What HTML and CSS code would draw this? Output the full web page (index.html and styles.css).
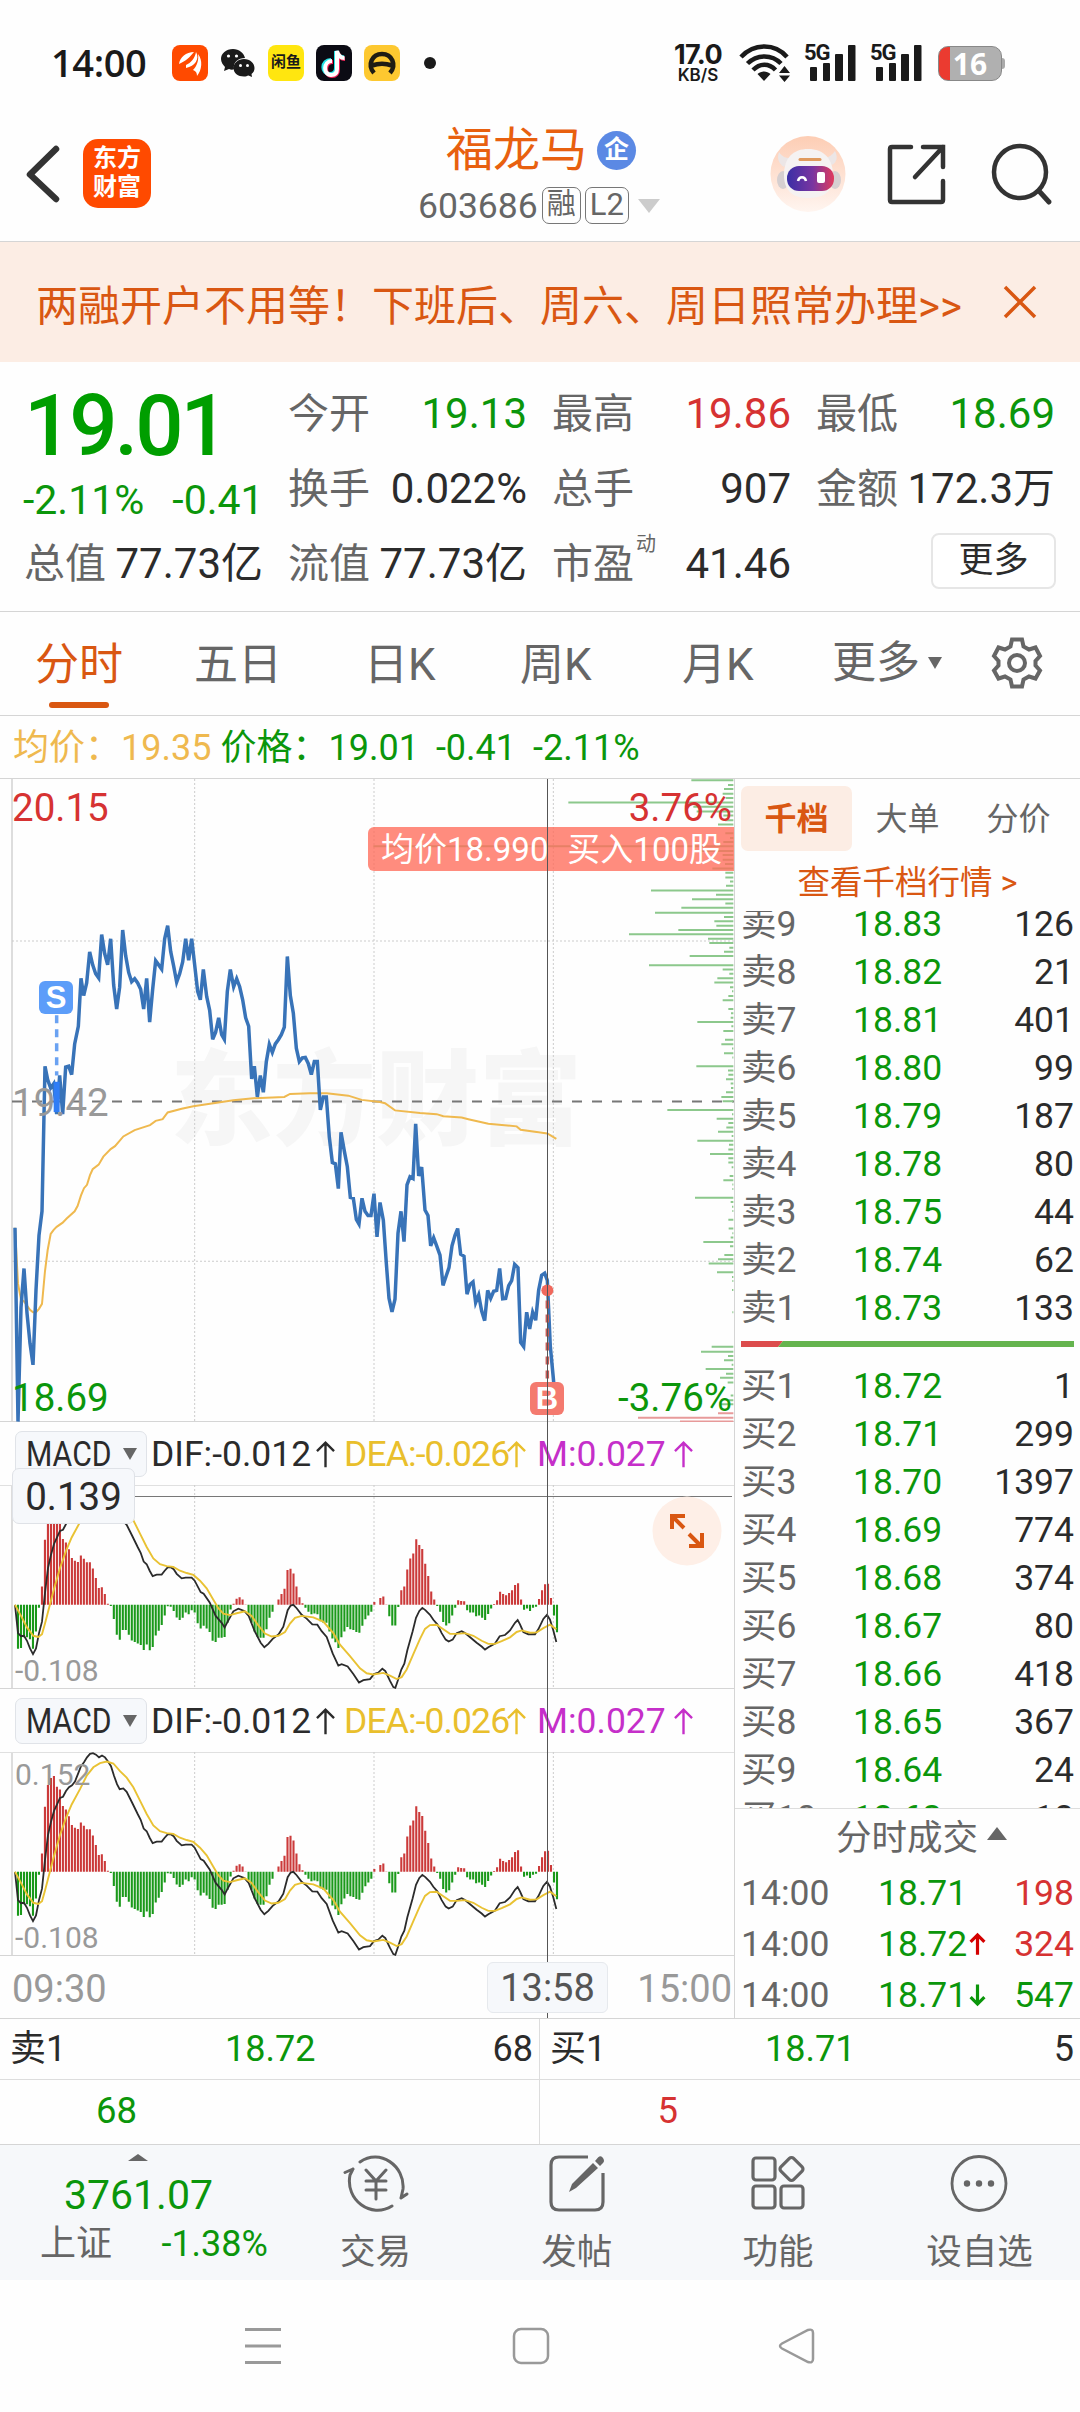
FILE: index.html
```html
<!DOCTYPE html>
<html lang="zh-CN">
  <head>
    <meta charset="UTF-8" />
    <meta name="viewport" content="width=device-width, initial-scale=1.0" />
    <title>福龙马 603686</title>
    <link rel="stylesheet" href="styles.css">
  </head>
  <body>
    <!-- Status Bar -->
    <div class="status-bar">
      <span class="clock">14:00</span>
      <div class="app-icons">
        <svg width="36" height="36" viewBox="0 0 36 36">
          <rect width="36" height="36" rx="8" fill="#ff4a00" />
          <path d="M7 19C8 12 14 7 22 7C18 12 14 16 7 19ZM14 20C19 18 23 13 24 7C28 14 23 21 14 23ZM21 25C25 21 27 15 26 9C31 15 30 25 25 31C25 28 24 26 21 25Z" fill="#fff" />
        </svg>
        <svg width="36" height="36" viewBox="0 0 36 36">
          <path d="M13 4C6 4 1 8.500 1 14C1 17 3 20 5 22L4 26L9 24C11 25 13 25 14 24C13 17 18 13 25 13C24 8 19 4 13 4Z" fill="#1a1a1a" />
          <path d="M24 14C18 14 13.500 18 13.500 23C13.500 28 18 31.500 24 31.500C26 31.500 27 31 28.500 30.500L32 32L31.500 29C33.500 27.500 34.500 25.500 34.500 23C34.500 18 30 14 24 14Z" fill="#1a1a1a" />
          <g fill="#fff"><circle cx="8.500" cy="11" r="1.600" /><circle cx="16.500" cy="11" r="1.600" /><circle cx="20.500" cy="20.500" r="1.500" /><circle cx="27.500" cy="20.500" r="1.500" /></g>
        </svg>
        <span class="app-fish">闲鱼</span>
        <svg width="36" height="36" viewBox="0 0 36 36">
          <rect width="36" height="36" rx="8" fill="#0b0b14" />
          <g fill="none" stroke-width="4">
            <path d="M15 15C5 15 5 29 14 29C18 29 20 27 20 23V6C21 10 24 12 28 12.500" stroke="#25e5e8" />
            <path d="M17 17C8 17 8 31 16 31C20 31 22 28 22 25V8C23 12 25 14 29 14" stroke="#f5255a" />
            <path d="M16 16C7 16 7 30 15 30C19 30 21 28 21 24V6C22 10 24 13 28.500 13" stroke="#fff" />
          </g>
        </svg>
        <svg width="36" height="36" viewBox="0 0 36 36">
          <rect width="36" height="36" rx="8" fill="#fdc830" />
          <path d="M10 28C3 20 8 9 18 9C28 9 33 20 26 28M8 20.500C14 18.500 22 18.500 28 20.500" fill="none" stroke="#1f1c14" stroke-width="4.500" />
        </svg>
        <i class="more-dot"></i>
      </div>
      <div class="net-speed"><b>17.0</b><span>KB/S</span></div>
      <svg class="wifi" width="52" height="38" viewBox="0 0 52 38">
        <g fill="none" stroke="#1a1a1a" stroke-width="4.500">
          <path d="M2 13C15 -1 36 -1 48 13" />
          <path d="M8.500 19.500C18 10 33 10 42 19.500" />
          <path d="M14 26C21 19 30 19 36.500 26" />
        </g>
        <path d="M18.500 30C22 26.500 28 26.500 31.500 30L25 37ZM40 29L45.500 22L51 29ZM40 31.500H51L45.500 38Z" fill="#1a1a1a" />
      </svg>
      <div class="signal">
        <span>5G</span>
        <svg width="52" height="38" viewBox="0 0 52 38" fill="#1a1a1a">
          <rect x="6" y="23" width="7" height="14" rx="1" /><rect x="19" y="19" width="7" height="18" rx="1" /><rect x="31" y="10" width="8" height="27" rx="1" /><rect x="44" y="1" width="7.500" height="36" rx="1" />
        </svg>
      </div>
      <div class="signal">
        <span>5G</span>
        <svg width="52" height="38" viewBox="0 0 52 38" fill="#1a1a1a">
          <rect x="6" y="23" width="7" height="14" rx="1" /><rect x="19" y="19" width="7" height="18" rx="1" /><rect x="31" y="10" width="8" height="27" rx="1" /><rect x="44" y="1" width="7.500" height="36" rx="1" />
        </svg>
      </div>
      <div class="battery">16</div>
    </div>

    <!-- Title Bar -->
    <div class="header">
      <svg width="34" height="58" viewBox="0 0 34 58">
        <path d="M30 4L4 29.500L30 54" fill="none" stroke="#333" stroke-width="6.500" stroke-linecap="round" stroke-linejoin="round" />
      </svg>
      <div class="logo">东方<br />财富</div>
      <div class="title">
        <div class="stock-name">福龙马<span class="badge">企</span></div>
        <div class="stock-code">603686<span class="tag">融</span><span class="tag">L2</span><i class="caret"></i></div>
      </div>
      <svg class="robot" width="76" height="78" viewBox="0 0 76 78">
        <defs>
          <linearGradient id="peach" x1="0" y1="0" x2="0" y2="1"><stop offset="0" stop-color="#fdcdb4" /><stop offset="1" stop-color="#fff5f0" /></linearGradient>
          <linearGradient id="visor" x1="0" y1="0" x2="1" y2="0"><stop offset="0" stop-color="#3a2fa6" /><stop offset=".55" stop-color="#7a35a0" /><stop offset="1" stop-color="#e03a5c" /></linearGradient>
        </defs>
        <ellipse cx="38" cy="39" rx="37.500" ry="38" fill="url(#peach)" />
        <path d="M14 32C8 28 7 23 9 17C12 22 16 23 20 23M62 30C67 27 68 22 65 16C62 20 59 22 56 23" fill="#ece6e6" />
        <ellipse cx="13" cy="45" rx="6" ry="9" fill="#d6cfd0" /><ellipse cx="65" cy="45" rx="6" ry="9" fill="#d6cfd0" />
        <path d="M14 40C14 22 24 14 38 14C54 14 63 24 63 40C63 57 54 63 38 63C22 63 14 55 14 40Z" fill="#f5f2f2" />
        <rect x="17" y="31" width="47" height="25" rx="12" fill="url(#visor)" />
        <path d="M30 24.500H50" stroke="#e09a5e" stroke-width="3" stroke-linecap="round" />
        <path d="M28 46C29 41 35 41 36 46" fill="none" stroke="#fff" stroke-width="2.500" />
        <rect x="47" y="37" width="8" height="11" rx="2" fill="#fff" />
      </svg>
      <svg class="share" width="60" height="62" viewBox="0 0 60 62">
        <path d="M24 4H5Q3 4 3 6V57Q3 59 5 59H54Q56 59 56 57V38M36 4H56V24M56 4L28 34" fill="none" stroke="#333" stroke-width="4.500" stroke-linecap="round" />
      </svg>
      <svg class="search" width="62" height="64" viewBox="0 0 62 64">
        <circle cx="29" cy="30" r="26" fill="none" stroke="#333" stroke-width="4.500" />
        <path d="M48 49L58 60" stroke="#333" stroke-width="5" stroke-linecap="round" />
      </svg>
    </div>

    <div class="notice">
      <span>两融开户不用等！下班后、周六、周日照常办理&gt;&gt;</span>
      <svg width="34" height="34" viewBox="0 0 34 34"><path d="M2 2L32 32M32 2L2 32" stroke="#d95712" stroke-width="3.500" /></svg>
    </div>

    <!-- Quote -->
    <div class="quote">
      <div class="price-box">
        <div class="price">19.01</div>
        <div class="change"><span>-2.11%</span><span>-0.41</span></div>
      </div>
      <div class="stat"><label>今开</label><span class="green">19.13</span></div>
      <div class="stat"><label>最高</label><span class="red">19.86</span></div>
      <div class="stat"><label>最低</label><span class="green">18.69</span></div>
      <div class="stat"><label>换手</label><span>0.022%</span></div>
      <div class="stat"><label>总手</label><span>907</span></div>
      <div class="stat"><label>金额</label><span>172.3万</span></div>
      <div class="stat"><label>总值</label><span>77.73亿</span></div>
      <div class="stat"><label>流值</label><span>77.73亿</span></div>
      <div class="stat"><label>市盈<sup>动</sup></label><span>41.46</span></div>
      <div class="stat"><button class="more-btn">更多</button></div>
    </div>

    <!-- Period Tabs -->
    <div class="tabs">
      <span class="tab active">分时</span>
      <span class="tab">五日</span>
      <span class="tab">日K</span>
      <span class="tab">周K</span>
      <span class="tab">月K</span>
      <span class="tab tab-more">更多<i class="caret small"></i></span>
      <svg class="gear" width="54" height="54" viewBox="0 0 54 54" fill="none" stroke="#666" stroke-width="4">
        <path d="M22 3.500H32L33.500 10.500L39 13.500L45.500 11.500L50 20L45.500 25V29.500L50 34.500L45.500 42.500L39 40.500L33.500 43.500L32 50.500H22L20.500 43.500L15 40.500L8.500 42.500L4 34.500L8.500 29.500V25L4 20L8.500 11.500L15 13.500L20.500 10.500Z" />
        <circle cx="27" cy="27" r="8" />
      </svg>
    </div>

    <div class="legend">
      <span class="avg">均价：</span><span class="avg">19.35</span>
      <span class="green lab">价格：</span><span class="green">19.01</span>
      <span class="green gap">-0.41</span><span class="green gap">-2.11%</span>
    </div>

    <div class="main">
      <div class="chart">
        <div class="trend">
          <div class="watermark">东方财富</div>
          <svg id="trendSvg" width="734" height="643" viewBox="0 20 2202 1529" preserveAspectRatio="none"></svg>
          <span class="axis top red">20.15</span>
          <span class="axis mid">19.42</span>
          <span class="axis bottom green">18.69</span>
          <span class="axis top right red">3.76%</span>
          <span class="axis bottom right green">-3.76%</span>
          <span class="marker sell">S</span>
          <span class="marker buy">B</span>
          <div class="deal-tip"><span>均价18.990</span><span>买入100股</span></div>
        </div>

        <div class="macd-head">
          <div class="select"><b>MACD</b><i class="caret small"></i></div>
          <span class="dif">DIF:-0.012</span><svg class="arrow" viewBox="0 0 20 30"><path d="M10 29V3M1 12L10 3L19 12" /></svg>
          <span class="dea">DEA:-0.026</span><svg class="arrow dea" viewBox="0 0 20 30"><path d="M10 29V3M1 12L10 3L19 12" /></svg>
          <span class="m">M:0.027</span><svg class="arrow m" viewBox="0 0 20 30"><path d="M10 29V3M1 12L10 3L19 12" /></svg>
        </div>
        <div class="macd">
          <svg class="macd-svg" width="734" height="204" viewBox="0 868 2202 533" preserveAspectRatio="none"></svg>
          <span class="axis-small low">-0.108</span>
          <div class="cross-y"></div>
          <div class="value-tip">0.139</div>
          <svg class="expand" width="70" height="70" viewBox="0 0 70 70">
            <circle cx="35" cy="35" r="34.500" fill="#feefe7" />
            <path d="M33 20H20V33M21 21L32 32M37 38L49 50M50 37V50H37" fill="none" stroke="#d95712" stroke-width="4" />
          </svg>
        </div>

        <div class="macd-head">
          <div class="select"><b>MACD</b><i class="caret small"></i></div>
          <span class="dif">DIF:-0.012</span><svg class="arrow" viewBox="0 0 20 30"><path d="M10 29V3M1 12L10 3L19 12" /></svg>
          <span class="dea">DEA:-0.026</span><svg class="arrow dea" viewBox="0 0 20 30"><path d="M10 29V3M1 12L10 3L19 12" /></svg>
          <span class="m">M:0.027</span><svg class="arrow m" viewBox="0 0 20 30"><path d="M10 29V3M1 12L10 3L19 12" /></svg>
        </div>
        <div class="macd">
          <svg class="macd-svg" width="734" height="204" viewBox="0 868 2202 533" preserveAspectRatio="none"></svg>
          <span class="axis-small high">0.152</span>
          <span class="axis-small low">-0.108</span>
        </div>

        <div class="time-axis"><span>09:30</span><span class="end">15:00</span></div>
        <div class="cross-x"></div>
        <div class="time-tip">13:58</div>
      </div>

      <!-- Order Book -->
      <div class="book">
        <div class="book-tabs"><span class="active">千档</span><span>大单</span><span>分价</span></div>
        <div class="book-link">查看千档行情 &gt;</div>
        <div class="depth sells" id="sells"></div>
        <svg class="ratio" width="333" height="6" viewBox="0 0 333 6"><path d="M0 0H42L37 6H0Z" fill="#dc4c4c" /><path d="M42 0H333V6H37Z" fill="#65b44e" /></svg>
        <div class="depth buys" id="buys"></div>
        <div class="ticks-title">分时成交<i class="caret up"></i></div>
        <div id="ticks"></div>
      </div>
    </div>

    <!-- Best Bid / Ask -->
    <div class="best">
      <div class="best-row"><span>卖1</span><span class="green">18.72</span><span>68</span></div>
      <div class="best-row"><span>买1</span><span class="green">18.71</span><span>5</span></div>
      <div class="queue green">68</div>
      <div class="queue red">5</div>
    </div>

    <!-- Bottom Bar -->
    <div class="footer">
      <div class="index">
        <i class="caret up flat"></i>
        <div class="index-value">3761.07</div>
        <div class="index-row"><label>上证</label><span>-1.38%</span></div>
      </div>
      <div class="action">
        <svg width="66" height="62" viewBox="0 0 66 62">
          <path d="M17 9C37 -5 62 13 60 36L58 45M58 45L64 41M49 53C28 66 2 47 7 22L10 16M10 16L2 19.500M23 17L33 28L43 17M33 28V46M23 28H43M23 37H43" fill="none" stroke="#666" stroke-width="3" stroke-linecap="round" />
        </svg>
        <span>交易</span>
      </div>
      <div class="action">
        <svg width="58" height="62" viewBox="0 0 58 62">
          <path d="M40 4H11Q3 4 3 12V49Q3 57 11 57H47Q55 57 55 49V20" fill="none" stroke="#666" stroke-width="3.200" />
          <path d="M21 39L24 31L45 10L50 15L28 35ZM47 8L50 4.500Q53 2 55 5Q57 8 55 10L52 13Z" fill="#666" />
        </svg>
        <span>发帖</span>
      </div>
      <div class="action">
        <svg width="56" height="62" viewBox="0 0 56 62" fill="none" stroke="#666" stroke-width="3.200">
          <rect x="3" y="5" width="22" height="22" rx="3" /><rect x="3" y="33" width="22" height="22" rx="3" /><rect x="31" y="33" width="22" height="22" rx="3" />
          <rect x="32.500" y="7" width="18" height="18" rx="3" transform="rotate(45 41.500 16)" />
        </svg>
        <span>功能</span>
      </div>
      <div class="action">
        <svg width="60" height="62" viewBox="0 0 60 62">
          <circle cx="30" cy="30.500" r="27" fill="none" stroke="#666" stroke-width="2.800" />
          <g fill="#666"><circle cx="18" cy="30.500" r="3.200" /><circle cx="30" cy="30.500" r="3.200" /><circle cx="42" cy="30.500" r="3.200" /></g>
        </svg>
        <span>设自选</span>
      </div>
    </div>

    <div class="nav">
      <svg width="38" height="38" viewBox="0 0 38 38"><path d="M1 2.500H37M1 19H37M1 35.500H37" stroke="#999" stroke-width="3" /></svg>
      <svg width="38" height="38" viewBox="0 0 38 38"><rect x="2" y="2" width="34" height="34" rx="7" fill="none" stroke="#999" stroke-width="2.500" /></svg>
      <svg width="38" height="38" viewBox="0 0 38 38"><path d="M4 16.500L30 3Q35 1.500 35 6V32Q35 36.500 30 35L4 21.500Q0 19 4 16.500Z" fill="none" stroke="#999" stroke-width="2.500" /></svg>
    </div>

    <script src="script.js"></script>
  </body>
</html>
```
FILE: script.js
```js
// Order book levels
const sells = [
  [9, '18.83', 126], [8, '18.82', 21], [7, '18.81', 401],
  [6, '18.80', 99], [5, '18.79', 187], [4, '18.78', 80],
  [3, '18.75', 44], [2, '18.74', 62], [1, '18.73', 133],
]

const buys = [
  [1, '18.72', 1], [2, '18.71', 299], [3, '18.70', 1397],
  [4, '18.69', 774], [5, '18.68', 374], [6, '18.67', 80],
  [7, '18.66', 418], [8, '18.65', 367], [9, '18.64', 24],
  [10, '18.63', 18],
]

const ticks = [
  { time: '14:00', price: '18.71', dir: '', qty: 198, color: 'red' },
  { time: '14:00', price: '18.72', dir: 'up', qty: 324, color: 'red' },
  { time: '14:00', price: '18.71', dir: 'down', qty: 547, color: 'green' },
]

const arrows = {
  '': '',
  up: '<svg class="dir" viewBox="0 0 16 22"><path d="M8 21V2M1.500 9L8 2.500L14.500 9" stroke="#d40000" /></svg>',
  down: '<svg class="dir" viewBox="0 0 16 22"><path d="M8 1V20M1.500 13L8 19.500L14.500 13" stroke="#0b960b" /></svg>',
}

function renderLevels(id, label, data) {
  document.getElementById(id).innerHTML = data
    .map(
      ([level, price, qty]) =>
        `<div class="level"><span>${label}${level}</span><span class="green">${price}</span><span>${qty}</span></div>`
    )
    .join('')
}

renderLevels('sells', '卖', sells)
renderLevels('buys', '买', buys)

document.getElementById('ticks').innerHTML = ticks
  .map(
    (t) =>
      `<div class="tick"><span>${t.time}</span><span class="green">${t.price}${arrows[t.dir]}</span><span class="${t.color}">${t.qty}</span></div>`
  )
  .join('')

// Minute prices as x,y pairs
const priceLine =
  '45,1087 54,1548 63,1277 72,1184 81,1290 90,1362 99,1413 108,1235 117,1105 126,1048 135,703 143,735 152,755 161,745 170,817 179,725 188,817 197,705 206,703 215,723 224,650 235,608 243,494 251,535 260,505 269,431 278,462 287,483 296,493 305,390 314,435 323,462 332,400 341,510 350,567 359,515 368,379 377,440 386,480 395,502 404,495 413,505 422,520 431,567 440,494 449,598 458,520 467,452 476,462 485,472 494,400 503,369 512,430 521,465 530,503 539,483 548,455 557,400 566,451 575,400 584,462 593,525 601,545 610,473 620,537 629,570 638,639 647,622 656,588 665,628 673,639 682,525 691,473 701,514 710,495 719,514 728,545 737,588 746,608 755,733 763,703 772,776 781,725 790,765 799,692 808,651 817,670 826,650 835,640 844,628 853,610 862,442 871,535 880,577 889,660 898,692 907,683 916,682 925,697 934,723 943,692 952,692 961,807 970,776 979,776 988,872 997,932 1006,935 1015,994 1023,860 1033,905 1042,942 1051,1015 1060,1017 1069,1067 1077,1078 1086,1017 ' +
  '1095,1048 1104,1058 1113,1058 1122,1006 1131,1109 1140,1027 1150,1069 1159,1172 1167,1255 1176,1287 1185,1257 1194,1100 1203,1048 1212,1120 1221,985 1230,966 1239,970 1247,840 1256,964 1265,943 1275,1045 1284,1058 1292,1130 1301,1111 1310,1130 1320,1152 1329,1224 1338,1203 1347,1182 1356,1130 1365,1105 1373,1089 1382,1150 1392,1155 1401,1245 1410,1222 1419,1216 1427,1265 1436,1247 1445,1285 1454,1308 1463,1236 1472,1255 1481,1238 1490,1236 1499,1184 1508,1256 1517,1255 1526,1225 1535,1213 1544,1174 1554,1182 1562,1360 1571,1370 1580,1288 1589,1328 1598,1288 1607,1307 1616,1235 1625,1200 1634,1195 1642,1212 1651,1370 1660,1445 1669,1528'

const avgLine =
  '45,1087 54,1220 63,1258 72,1262 81,1272 90,1282 99,1288 108,1288 117,1280 126,1268 135,1190 143,1140 152,1102 161,1092 170,1085 188,1075 200,1065 224,1048 233,1035 243,1010 252,993 261,985 270,962 278,948 296,937 310,918 332,900 345,893 370,870 404,855 450,843 467,833 488,829 503,813 545,804 580,798 640,791 700,784 760,779 853,776 870,769 930,767 980,767 1045,773 1085,783 1140,788 1155,791 1185,808 1260,814 1310,817 1330,822 1385,825 1405,829 1465,840 1550,846 1562,854 1642,863 1669,876'

// Pending orders at each price: y, length
const orders = [
  [23, 126], [34, 16], [44, 28], [55, 32], [65, 23], [76, 495], [86, 120], [97, 110], [107, 30], [118, 25], [128, 46],
  [149, 24], [160, 10], [170, 30], [180, 1080], [191, 120], [201, 32], [212, 32], [222, 25], [233, 63], [243, 24], [254, 24], [264, 10], [274, 22],
  [285, 247], [295, 52], [306, 124], [316, 24], [326, 156], [338, 235], [348, 28], [358, 57], [369, 51], [379, 165], [389, 313], [400, 76], [410, 72],
  [421, 12], [431, 28], [441, 131], [463, 253], [473, 32], [483, 12], [494, 48], [504, 57], [515, 10], [525, 4], [536, 15], [546, 32],
  [567, 15], [577, 7], [588, 8], [598, 108], [608, 6], [619, 30], [640, 25], [651, 36], [661, 4], [672, 28], [682, 3], [703, 111], [713, 16],
  [723, 15], [734, 22], [744, 8], [755, 7], [765, 22], [776, 36], [786, 32], [807, 198], [817, 4], [828, 50], [838, 15], [849, 21], [859, 46],
  [869, 5], [880, 108], [890, 13], [901, 15], [912, 70], [922, 15], [932, 15], [943, 5], [964, 11], [974, 30], [984, 3], [995, 3], [1016, 115], [1026, 8],
  [1037, 4], [1047, 3], [1068, 15], [1089, 14], [1100, 3], [1110, 8], [1121, 90], [1131, 10], [1152, 27], [1162, 46], [1172, 74], [1193, 49], [1204, 4], [1214, 3], [1235, 4],
  [1288, 3], [1370, 65], [1382, 97], [1392, 16], [1402, 28], [1413, 5], [1423, 83], [1434, 22], [1444, 40], [1455, 17], [1486, 8], [1497, 15], [1507, 40],
]
const bidOrders = [[1528, 46], [1539, 286], [1548, 160]]

// MACD histogram, positive values are drawn below the zero line
const hist = [
  0, 115, 113, 85, 85, 90, 115, 70, 8, -48, -170, -227, -245, -250, -222, -215, -172, -163, -145, -122, -115, -112, -129, -120, -111, -111, -95, -70, -44, -46, -28, -3,
  3, 37, 78, 91, 66, 66, 78, 93, 97, 101, 105, 118, 104, 119, 110, 80, 68, 53, 28, 4, 5, 16, 33, 40, 34, 20, 25, 14, 20, 48, 62, 55, 62, 71, 94, 97, 86, 86, 84, 47, 12,
  -3, -16, -20, -14, -1, 22, 47, 70, 84, 86, 86, 64, 34, 18, 0, -14, -28, -42, -91, -94, -82, -48, -20, -4,
  8, 18, 25, 23, 25, 43, 47, 47, 70, 88, 98, 113, 85, 70, 58, 64, 66, 71, 73, 55, 38, 28, 18, -7, 0, -18, -22, -1, 30, 54, 54, 6,
  -38, -48, -92, -121, -134, -171, -156, -146, -107, -75, -35, -14, 3, 18, 45, 54, 48, 28, 8, -12, -10, -9, 14, 20, 20, 30, 28, 34, 40, 24, 10,
  -2, -12, -34, -28, -25, -31, -38, -52, -56, -14, 13, 10, 16, 8, 5, -15, -38, -54, -55, -18, 28, 72,
]

const difLine =
  '45,1181 54,1255 63,1263 72,1262 81,1275 90,1295 99,1310 108,1295 117,1255 126,1225 135,1150 144,1085 153,1050 162,1022 171,1005 180,988 189,985 198,970 207,960 216,955 225,945 234,925 243,905 252,895 261,882 270,873 279,871 288,875 297,882 306,877 315,882 324,893 333,905 342,930 351,952 359,965 370,963 380,972 395,998 413,1030 422,1045 431,1068 440,1075 449,1092 458,1106 470,1102 485,1102 494,1092 503,1083 512,1083 521,1088 530,1100 545,1112 557,1110 575,1110 584,1118 602,1148 611,1152 629,1175 647,1210 665,1228 674,1240 683,1225 700,1198 715,1191 733,1197 746,1210 764,1250 782,1280 793,1292 805,1283 818,1270 836,1258 850,1238 863,1195 872,1183 880,1181 890,1190 905,1207 920,1217 937,1232 952,1233 965,1250 980,1265 998,1308 1015,1340 1025,1336 1043,1342 1060,1362 1077,1384 1090,1378 1110,1375 1122,1362 1135,1358 1147,1348 1156,1354 1170,1380 1180,1396 1186,1398 1195,1375 1204,1350 1213,1335 1222,1300 1238,1250 1248,1215 1258,1197 1267,1189 1276,1195 1290,1207 1300,1220 1312,1232 1325,1255 1337,1272 1346,1277 1358,1272 1370,1255 1385,1250 1395,1255 1405,1262 1430,1280 1445,1290 1455,1298 1465,1292 1485,1282 1499,1263 1515,1260 1530,1248 1545,1228 1553,1221 1560,1232 1570,1252 1585,1258 1605,1258 1615,1245 1630,1218 1641,1207 1650,1220 1660,1248 1669,1278'

const deaLine =
  '45,1181 63,1210 81,1240 100,1262 115,1265 126,1258 135,1230 144,1200 162,1140 180,1085 198,1040 215,1005 240,965 260,930 280,908 300,897 320,893 340,898 360,918 380,935 400,960 420,995 440,1030 460,1060 480,1075 500,1080 520,1082 540,1092 560,1098 580,1103 600,1118 620,1138 640,1168 655,1190 670,1204 690,1208 710,1203 735,1198 755,1210 775,1235 795,1256 815,1264 835,1262 855,1252 870,1230 885,1215 905,1210 940,1214 970,1225 1000,1255 1020,1285 1050,1315 1080,1347 1100,1360 1120,1363 1150,1359 1170,1366 1190,1375 1205,1370 1220,1350 1240,1310 1260,1270 1275,1244 1290,1234 1310,1233 1330,1245 1350,1257 1370,1257 1395,1255 1420,1262 1445,1275 1465,1283 1485,1283 1505,1276 1530,1266 1550,1252 1565,1248 1590,1254 1610,1253 1630,1242 1650,1233 1669,1245'

const gridX = [584, 1122, 1660]

function polyline(points, color, width) {
  return `<polyline points="${points}" fill="none" stroke="${color}" stroke-width="${width}" />`
}

function path(d, color, width, dash = '') {
  return `<path d="${d}" fill="none" stroke="${color}" stroke-width="${width}" stroke-dasharray="${dash}" />`
}

function drawTrend() {
  const bars = (list) => list.map(([y, w]) => `M${2200 - w} ${y}H2200`).join('')
  const grid = gridX.map((x) => `M${x} 20V1549`).join('') + 'M36 405H2202M36 1167H2202'
  document.getElementById('trendSvg').innerHTML =
    path(grid, '#ccc', 1, '2 2') +
    path('M36 787H2202', '#777', 2, '10 10') +
    path(bars(orders), '#8cc88c', 2) +
    path(bars(bidOrders), '#e79a9a', 2) +
    polyline(avgLine, '#efb94f', 2) +
    polyline(priceLine, '#3873b8', 3.5) +
    path('M170 582V725', '#6aa2f2', 3.5, '8 6') +
    path('M170 740V812', '#2f7df6', 6) +
    path('M1642 1260V1455', '#c65b57', 3.5, '8 6') +
    '<ellipse cx="1642" cy="1236" rx="18" ry="14" fill="#f0685c" />'
}

function drawMacd(svg) {
  const step = 1626 / (hist.length - 1)
  let up = ''
  let down = ''
  hist.forEach((v, i) => {
    const bar = `M${(45 + i * step).toFixed(1)} 1181v${v}`
    if (v < 0) up += bar
    if (v > 0) down += bar
  })
  svg.innerHTML =
    path(gridX.map((x) => `M${x} 868V1401`).join(''), '#ccc', 1, '2 2') +
    path(up, '#cb3a3a', 2.1) +
    path(down, '#1a991a', 2.1) +
    polyline(difLine, '#2b2b2b', 1.8) +
    polyline(deaLine, '#e9c233', 1.9)
}

drawTrend()
document.querySelectorAll('.macd-svg').forEach(drawMacd)
```
FILE: styles.css
```css
/* Basic Styles */
* {
  box-sizing: border-box;
}

body {
  margin: 0;
  width: 1080px;
  height: 2412px;
  overflow: hidden;
  background-color: #fefefe;
  color: #2b2b2b;
  font-family: Roboto, "Noto Sans CJK SC", sans-serif;
  font-size: 36px;
  white-space: nowrap;
}

svg {
  display: block;
  flex: none;
}

.green {
  color: #0b960b;
}

.red {
  color: #d63232;
}

.caret {
  display: inline-block;
  border: 11px solid transparent;
  border-top: 14px solid #ccc;
  border-bottom: 0;
}

.caret.small {
  border-width: 12px 7.5px 0;
  border-top-color: #666;
}

.caret.up {
  border-width: 0 10.5px 13px;
  border-bottom: 13px solid #666;
}

.caret.flat {
  border-bottom-width: 7px;
}

/* Status Bar */
.status-bar {
  display: flex;
  align-items: center;
  height: 126px;
  padding-left: 51px;
  color: #1a1a1a;
}

.clock {
  width: 121px;
  padding-bottom: 3px;
  font: 600 38px/40px "Open Sans", Roboto, sans-serif;
  letter-spacing: -0.4px;
}

.app-icons {
  display: flex;
  align-items: center;
  gap: 12px;
  width: 500px;
}

.app-fish {
  width: 36px;
  height: 36px;
  border-radius: 8px;
  background-color: #ffe60f;
  font-size: 15px;
  font-weight: 700;
  line-height: 35px;
  text-align: center;
}

.more-dot {
  width: 12px;
  height: 12px;
  margin-left: 12px;
  border-radius: 50%;
  background-color: #1a1a1a;
}

.net-speed {
  display: flex;
  flex-direction: column;
  align-items: center;
  width: 52px;
}

.net-speed b {
  font: 700 27px/24px Inter, sans-serif;
  letter-spacing: -0.6px;
}

.net-speed span {
  font: 600 17px/16px Inter, sans-serif;
}

.wifi {
  margin-left: 15px;
}

.signal {
  position: relative;
  margin-left: 14px;
}

.signal span {
  position: absolute;
  left: 0;
  top: -2px;
  font: 700 22px/22px Roboto, sans-serif;
  letter-spacing: -1px;
}

.wifi + .signal {
  margin-left: 13px;
}

.battery {
  position: relative;
  width: 64px;
  height: 35px;
  margin-left: 16px;
  border: 1px solid #888;
  border-radius: 10px;
  background: linear-gradient(90deg, #eb3b30 11px, #b0b0b0 11px);
  color: #fff;
  font: 700 30px/33px "Open Sans", sans-serif;
  text-align: center;
}

.battery::after {
  content: "";
  position: absolute;
  right: -4px;
  top: 11px;
  width: 3px;
  height: 11px;
  border-radius: 0 3px 3px 0;
  background-color: #aaa;
}

/* Title Bar */
.header {
  display: flex;
  align-items: center;
  height: 116px;
  padding: 0 0 20px 26px;
  border-bottom: 1px solid #d5d5d5;
}

.logo {
  width: 68px;
  height: 69px;
  margin-left: 23px;
  padding-top: 5px;
  border-radius: 15px;
  background-color: #ff4a00;
  color: #fff;
  font-size: 24px;
  font-weight: 700;
  line-height: 29px;
  text-align: center;
}

.title {
  width: 270px;
  margin-left: 267px;
}

.stock-name {
  display: flex;
  align-items: center;
  height: 52px;
  margin-top: 12px;
  padding: 0 0 0 28px;
  color: #e8600f;
  font-size: 47px;
  line-height: 48px;
}

.badge {
  width: 39px;
  height: 39px;
  margin: 1px 0 0 10px;
  border-radius: 50%;
  background-color: #5b89e4;
  color: #fff;
  font-size: 25px;
  font-weight: 700;
  line-height: 37px;
  text-align: center;
}

.stock-code {
  display: flex;
  align-items: center;
  height: 60px;
  color: #666;
  font-size: 35.5px;
}

.tag {
  height: 37px;
  margin-left: 4px;
  padding: 0 4px;
  border: 1.5px solid #777;
  border-radius: 7px;
  font-size: 29px;
  line-height: 33px;
}

.tag + .tag {
  font-size: 31px;
}

.stock-code .caret {
  margin-left: 9px;
}

.robot {
  margin-left: 82px;
}

.share {
  margin-left: 41px;
}

.search {
  margin-left: 44px;
}

.notice {
  display: flex;
  align-items: center;
  justify-content: space-between;
  height: 120px;
  padding: 0 43px 0 36px;
  background-color: #fcede4;
  color: #d95712;
  font-size: 42px;
}

/* Quote */
.quote {
  display: grid;
  grid-template-columns: repeat(4, 238px);
  grid-auto-rows: 75px;
  column-gap: 26px;
  height: 250px;
  padding: 14px 25px 0;
  border-bottom: 1px solid #d5d5d5;
}

.price-box {
  grid-row: span 2;
  color: #009e00;
}

.price {
  margin-left: -1px;
  padding-top: 6px;
  font-size: 85px;
  font-weight: 500;
  line-height: 88px;
  letter-spacing: -3px;
}

.change {
  display: flex;
  gap: 28px;
  margin: 9px 0 0 -2px;
  color: #0b960b;
  font-size: 41px;
  line-height: 42px;
}

.stat {
  display: flex;
  align-items: center;
  justify-content: space-between;
  font-size: 42px;
  line-height: 50px;
}

.stat label {
  position: relative;
  margin-left: -1px;
  color: #666;
  font-size: 41px;
}

.stat sup {
  position: absolute;
  left: 84px;
  top: -5px;
  font-size: 20px;
  line-height: 20px;
}

.more-btn {
  width: 125px;
  height: 56px;
  margin: -5px -1px 0 auto;
  padding: 0;
  border: 2px solid #e6e6e6;
  border-radius: 8px;
  background-color: #fff;
  color: #2b2b2b;
  font: 35px/48px Roboto, "Noto Sans CJK SC", sans-serif;
}

/* Period Tabs */
.tabs {
  display: flex;
  height: 104px;
  padding-left: 35px;
  border-bottom: 1px solid #d5d5d5;
  color: #666;
  font-size: 44px;
  line-height: 107px;
}

.tab {
  position: relative;
  width: 159px;
}

.tab:nth-child(2) {
  width: 170px;
}

.tab:nth-child(3) {
  width: 156px;
}

.tab:nth-child(4) {
  width: 162px;
}

.tab.active {
  color: #d95712;
}

.tab.active::after {
  content: "";
  position: absolute;
  left: 14px;
  bottom: 7px;
  width: 60px;
  height: 6px;
  border-radius: 3px;
  background-color: #d95712;
}

.tab.tab-more {
  display: flex;
  align-items: center;
  width: 158px;
  margin-left: -9px;
}

.tab-more .caret {
  margin: -2px 0 0 8px;
}

.gear {
  margin-top: 24px;
}

.legend {
  display: flex;
  height: 63px;
  padding-left: 13px;
  border-bottom: 1px solid #d5d5d5;
  line-height: 64px;
}

.legend .avg {
  color: #efb94f;
}

.legend .lab {
  margin-left: 9px;
}

.legend .gap {
  margin-left: 17px;
}

/* Charts */
.main {
  display: flex;
  height: 1240px;
  border-bottom: 1px solid #d5d5d5;
}

.chart {
  position: relative;
  width: 735px;
  border-right: 1px solid #d5d5d5;
}

.trend {
  position: relative;
  height: 643px;
  border-bottom: 1.5px solid #d5d5d5;
}

.trend::before,
.macd::before {
  content: "";
  position: absolute;
  left: 11px;
  top: 0;
  width: 1.5px;
  height: 100%;
  background-color: #ddd;
}

.trend svg,
.macd-svg {
  position: relative;
}

.trend svg *,
.macd-svg * {
  vector-effect: non-scaling-stroke;
}

.watermark {
  position: absolute;
  left: 170px;
  top: 258px;
  color: #f6f6f6;
  font-size: 103px;
  font-weight: 900;
  line-height: 130px;
}

.axis {
  position: absolute;
  left: 12px;
  font-size: 38.5px;
  line-height: 40px;
}

.axis.top {
  top: 9px;
}

.axis.mid {
  top: 304px;
  color: #999;
}

.axis.bottom {
  top: 599px;
}

.axis.right {
  left: auto;
  right: 2px;
}

.marker {
  position: absolute;
  left: 39px;
  top: 202px;
  width: 34px;
  height: 33px;
  border-radius: 6px;
  background-color: #5c9df9;
  color: #fff;
  font: 700 31px/33px "Liberation Sans", sans-serif;
  text-align: center;
}

.marker.buy {
  left: 530px;
  top: 603px;
  background-color: #f47a6f;
}

.deal-tip {
  position: absolute;
  left: 368px;
  right: 0;
  top: 48px;
  display: flex;
  justify-content: space-between;
  height: 44px;
  padding: 0 12px 0 13px;
  border-radius: 6px 0 0 6px;
  background-color: rgba(255, 107, 90, 0.78);
  color: #fff;
  font-size: 33px;
  line-height: 45px;
}

.macd-head {
  display: flex;
  align-items: center;
  height: 63px;
  padding-left: 15px;
  font-size: 35.5px;
}

.select {
  display: flex;
  align-items: center;
  width: 132px;
  height: 46px;
  margin-right: 4px;
  padding-left: 10px;
  border: 1px solid #e0e3e8;
  border-radius: 7px;
  background-color: #f6f8fb;
}

.select b {
  width: 97px;
  font-weight: 400;
  transform: scaleX(0.85);
  transform-origin: left;
}

.macd-head span {
  width: 158px;
}

.macd-head span.dea {
  letter-spacing: -0.9px;
}

.macd-head span.m {
  width: 130px;
  margin-left: -2px;
}

.arrow {
  width: 19px;
  height: 30px;
  margin: 0 9px 0 7px;
  fill: none;
  stroke: #2b2b2b;
  stroke-width: 2.5;
}

.dea {
  color: #e9bf2c;
  stroke: #e9bf2c;
  stroke-width: 0;
}

.m {
  color: #c52fc9;
  stroke: #c52fc9;
  stroke-width: 0;
}

.arrow.dea,
.arrow.m {
  stroke-width: 2.5;
}

.arrow.dea {
  margin: 0 13px 0 5px;
}

.macd {
  position: relative;
  height: 204px;
  border-top: 1px solid #e0e0e0;
  border-bottom: 1.5px solid #d5d5d5;
}

.macd-svg {
  margin-top: -1px;
}

.axis-small {
  position: absolute;
  left: 15px;
  color: #999;
  font-size: 30px;
  line-height: 32px;
}

.axis-small.high {
  top: 6px;
}

.axis-small.low {
  bottom: 1px;
}

.cross-y {
  position: absolute;
  left: 12px;
  right: 2px;
  top: 9.5px;
  height: 1.5px;
  background-color: #777;
}

.cross-x {
  position: absolute;
  left: 547px;
  top: 0;
  width: 1px;
  height: 1239px;
  background-color: #555;
}

.value-tip {
  position: absolute;
  left: 12px;
  top: -18px;
  width: 123px;
  height: 56px;
  border: 1px solid #dfe2e7;
  border-radius: 7px;
  background-color: #f6f8fb;
  font-size: 38.5px;
  line-height: 56px;
  text-align: center;
}

.expand {
  position: absolute;
  left: 652px;
  top: 10px;
}

.time-axis {
  display: flex;
  justify-content: space-between;
  padding: 0 2px 0 12px;
  color: #999;
  font-size: 38px;
  line-height: 66px;
}

.time-tip {
  position: absolute;
  left: 487px;
  top: 1183px;
  width: 121px;
  height: 51px;
  border: 1px solid #e6e9ed;
  border-radius: 6px;
  background-color: #f6f8fb;
  color: #555;
  font-size: 38px;
  line-height: 51px;
  text-align: center;
}

/* Order Book */
.book {
  width: 345px;
  padding: 7px 6px 0;
}

.book-tabs {
  display: flex;
  height: 65px;
  color: #666;
  font-size: 32px;
  line-height: 67px;
  text-align: center;
}

.book-tabs span {
  width: 111px;
}

.book-tabs .active {
  border-radius: 7px;
  background-color: #fcede4;
  color: #d95712;
  font-weight: 700;
}

.book-link {
  height: 60px;
  color: #d95712;
  font-size: 32.5px;
  line-height: 64px;
  text-align: center;
}

.depth {
  display: flex;
  flex-direction: column;
  overflow: hidden;
}

.depth.sells {
  justify-content: flex-end;
  height: 420px;
}

.ratio {
  margin: 10px 0 14px;
}

.depth.buys {
  height: 447px;
}

.level,
.tick {
  display: flex;
  flex: none;
  height: 48px;
  font-size: 35.5px;
  line-height: 50px;
}

.level span:first-child {
  width: 112px;
  color: #666;
}

.level span:last-child,
.tick span:last-child {
  margin-left: auto;
}

.ticks-title {
  display: flex;
  align-items: center;
  justify-content: center;
  height: 58px;
  margin: 0 -6px;
  padding-left: 28px;
  border-top: 1px solid #ddd;
  color: #666;
  font-size: 35.5px;
  line-height: 54px;
}

.ticks-title .caret {
  margin: -8px 0 0 9px;
}

.tick {
  height: 51px;
  line-height: 54px;
}

.tick span:first-child {
  width: 137px;
  color: #666;
}

.dir {
  display: inline-block;
  width: 17px;
  height: 24px;
  margin-left: 2px;
  fill: none;
  stroke-width: 3;
}

/* Best Bid / Ask */
.best {
  display: grid;
  grid-template-columns: 540px 540px;
  grid-template-rows: 61px 64px;
  border-bottom: 1px solid #d5d5d5;
}

.best > div:nth-child(odd) {
  border-right: 1px solid #ddd;
}

.best .best-row {
  display: flex;
  padding: 0 6px 0 10px;
  border-bottom: 1px solid #ddd;
  line-height: 61px;
}

.best-row span:nth-child(2) {
  margin: 0 auto 0 0;
}

.best-row span:first-child {
  width: 215px;
}

.queue {
  width: 540px;
  padding-right: 402px;
  font-size: 36.5px;
  line-height: 61px;
  text-align: right;
}

/* Bottom Bar */
.footer {
  display: flex;
  height: 135px;
  padding-left: 2px;
  background-color: #f6f8fa;
  color: #666;
}

.index {
  width: 273px;
  color: #0b960b;
  text-align: center;
}

.index .caret {
  display: block;
  width: 0;
  margin: 9px auto 0;
}

.index-value {
  margin-top: 10px;
  font-size: 41px;
  line-height: 48px;
}

.index-row {
  display: flex;
  justify-content: space-between;
  padding: 0 7px 0 38px;
  font-size: 36px;
  line-height: 51px;
}

.index-row label {
  color: #666;
}

.action {
  display: flex;
  flex-direction: column;
  align-items: center;
  width: 201.3px;
  padding-top: 8px;
  font-size: 35.5px;
}

.action span {
  line-height: 75px;
}

.nav {
  display: flex;
  gap: 230px;
  padding: 47px 0 0 244px;
}

.nav svg:last-child {
  margin-left: -2px;
}
```
